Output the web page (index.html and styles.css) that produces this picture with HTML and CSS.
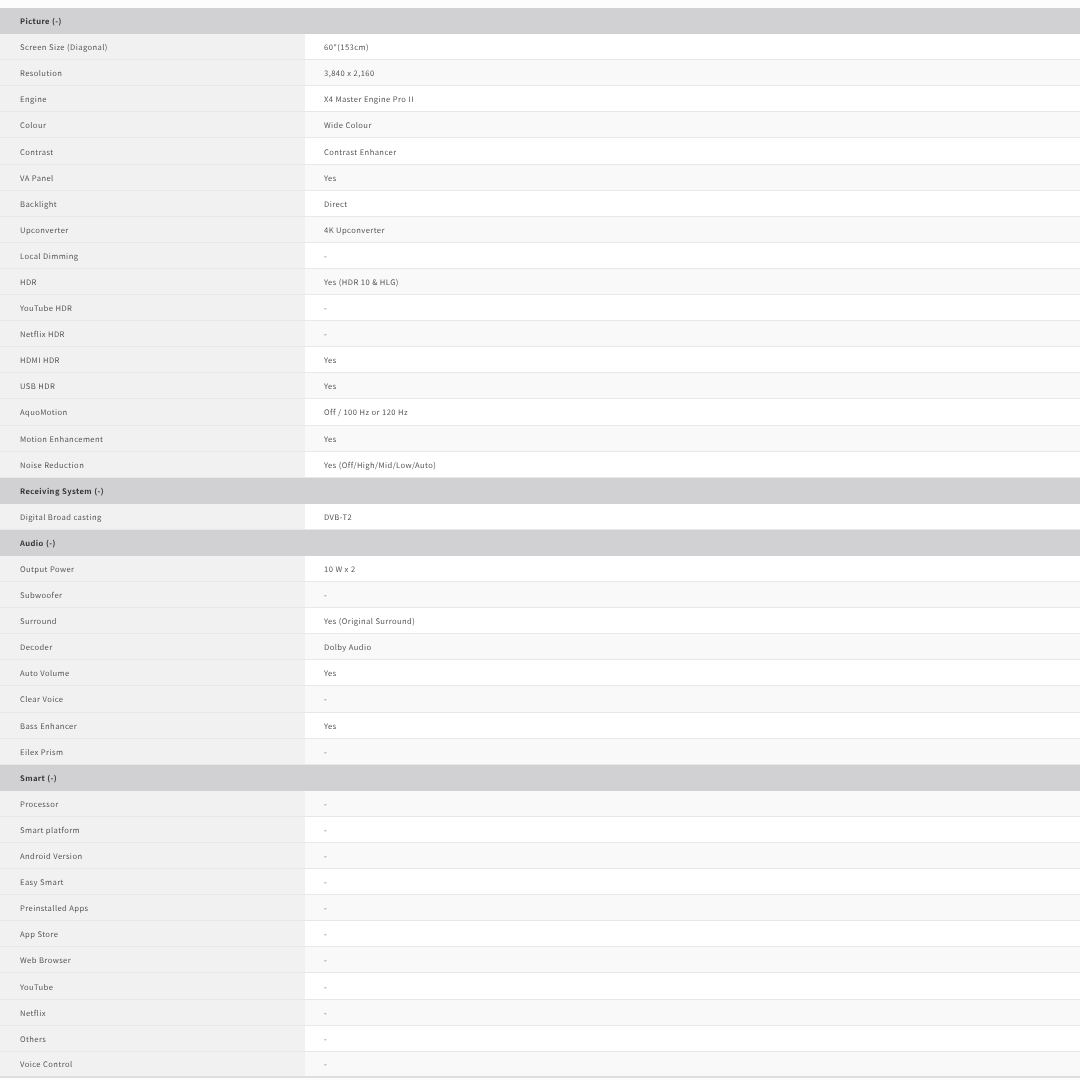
FILE: index.html
```html
<!DOCTYPE html>
<html lang="en">
<head>
<meta charset="utf-8">
<title>Specifications</title>
<link rel="stylesheet" href="styles.css">
</head>
<body>
<table class="spec">
<colgroup><col class="label-col"><col></colgroup>
<tbody>
<tr class="group"><th colspan="2">Picture (-)</th></tr>
<tr><th>Screen Size (Diagonal)</th><td>60"(153cm)</td></tr>
<tr><th>Resolution</th><td>3,840 x 2,160</td></tr>
<tr><th>Engine</th><td>X4 Master Engine Pro II</td></tr>
<tr><th>Colour</th><td>Wide Colour</td></tr>
<tr><th>Contrast</th><td>Contrast Enhancer</td></tr>
<tr><th>VA Panel</th><td>Yes</td></tr>
<tr><th>Backlight</th><td>Direct</td></tr>
<tr><th>Upconverter</th><td>4K Upconverter</td></tr>
<tr><th>Local Dimming</th><td>-</td></tr>
<tr><th>HDR</th><td>Yes (HDR 10 &amp; HLG)</td></tr>
<tr><th>YouTube HDR</th><td>-</td></tr>
<tr><th>Netflix HDR</th><td>-</td></tr>
<tr><th>HDMI HDR</th><td>Yes</td></tr>
<tr><th>USB HDR</th><td>Yes</td></tr>
<tr><th>AquoMotion</th><td>Off / 100 Hz or 120 Hz</td></tr>
<tr><th>Motion Enhancement</th><td>Yes</td></tr>
<tr><th>Noise Reduction</th><td>Yes (Off/High/Mid/Low/Auto)</td></tr>
<tr class="group"><th colspan="2">Receiving System (-)</th></tr>
<tr><th>Digital Broad casting</th><td>DVB-T2</td></tr>
<tr class="group"><th colspan="2">Audio (-)</th></tr>
<tr><th>Output Power</th><td>10 W x 2</td></tr>
<tr><th>Subwoofer</th><td>-</td></tr>
<tr><th>Surround</th><td>Yes (Original Surround)</td></tr>
<tr><th>Decoder</th><td>Dolby Audio</td></tr>
<tr><th>Auto Volume</th><td>Yes</td></tr>
<tr><th>Clear Voice</th><td>-</td></tr>
<tr><th>Bass Enhancer</th><td>Yes</td></tr>
<tr><th>Eilex Prism</th><td>-</td></tr>
<tr class="group"><th colspan="2">Smart (-)</th></tr>
<tr><th>Processor</th><td>-</td></tr>
<tr><th>Smart platform</th><td>-</td></tr>
<tr><th>Android Version</th><td>-</td></tr>
<tr><th>Easy Smart</th><td>-</td></tr>
<tr><th>Preinstalled Apps</th><td>-</td></tr>
<tr><th>App Store</th><td>-</td></tr>
<tr><th>Web Browser</th><td>-</td></tr>
<tr><th>YouTube</th><td>-</td></tr>
<tr><th>Netflix</th><td>-</td></tr>
<tr><th>Others</th><td>-</td></tr>
<tr><th>Voice Control</th><td>-</td></tr>
</tbody>
</table>
</body>
</html>
```
FILE: styles.css
```css
html, body {
  margin: 0;
  padding: 0;
  background: #fcfcfc;
}
body {
  padding-top: 8px;
  height: 1080px;
  box-sizing: border-box;
  overflow: hidden;
}
.spec {
  width: 1080px;
  border-collapse: separate;
  border-spacing: 0;
  table-layout: fixed;
  font-family: "Noto Sans CJK KR", "Noto Sans", sans-serif;
  font-size: 7.6px;
  letter-spacing: 0.42px;
  color: #555;
  text-rendering: geometricPrecision;
  filter: blur(0.35px);
}
.label-col {
  width: 305px;
}
.spec tr {
  height: 26.1px;
}
.spec th,
.spec td {
  padding: 3px 0 0;
  border-bottom: 1px solid #e8e8e8;
  box-sizing: border-box;
  font-weight: 400;
  text-align: left;
  vertical-align: middle;
  line-height: 12px;
}
.spec th {
  padding-left: 20px;
  background: #f1f1f1;
}
.spec td {
  padding-left: 19px;
  background: #f9f9f9;
}
.spec tr:nth-child(even) td {
  background: #fff;
}
.spec .group th {
  padding-top: 2px;
  background: #d1d1d3;
  color: #333;
  font-weight: 700;
  border-bottom: 0;
}
.spec tr:last-child th,
.spec tr:last-child td {
  border-bottom: 2px solid #dedede;
}
```
